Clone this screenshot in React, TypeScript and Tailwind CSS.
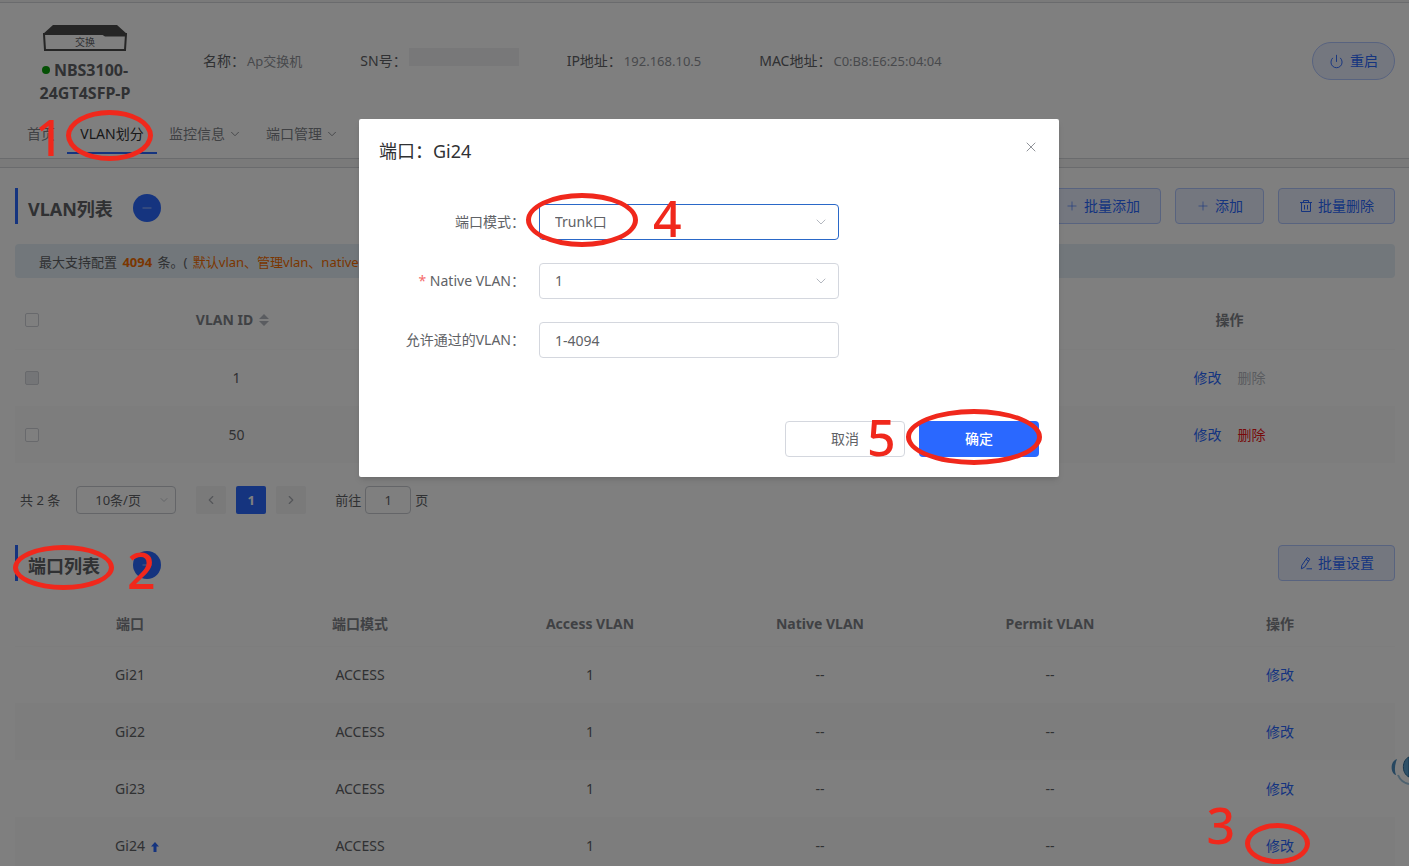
import { useState, type ReactNode } from 'react';
import { ChevronDown, ChevronLeft, ChevronRight, Minus, Plus, Power, X } from 'lucide-react';

const ports = [
  { name: 'Gi21', mode: 'ACCESS', access: '1', uplink: false },
  { name: 'Gi22', mode: 'ACCESS', access: '1', uplink: false },
  { name: 'Gi23', mode: 'ACCESS', access: '1', uplink: false },
  { name: 'Gi24', mode: 'ACCESS', access: '1', uplink: true },
];

const vlans = [
  { id: '1', remark: 'VLAN0001', locked: true },
  { id: '50', remark: 'VLAN0050', locked: false },
];

function TrashIcon() {
  return (
    <svg viewBox="0 0 14 14" className="h-3.5 w-3.5" fill="none" stroke="currentColor" strokeWidth="1">
      <path d="M1 3.5h12M4.5 3.5v-2h5v2M2.5 3.5v9h9v-9M5.500 6v4.500M8.500 6v4.500" />
    </svg>
  );
}

function EditIcon() {
  return (
    <svg viewBox="0 0 14 14" className="h-3.5 w-3.5" fill="none" stroke="currentColor" strokeWidth="1">
      <path d="M8.2 1.600 10.800 3.200 5.600 11.200 2.400 12.800 2.800 9.400zM7 3.400l2.700 1.700M7.500 12.800h5.500" />
    </svg>
  );
}

function SortIcon() {
  return (
    <svg viewBox="0 0 10 12" className="h-3 w-2.5" fill="#b4b8c0">
      <path d="M5 0l5 5H0zM5 12l5-5H0z" />
    </svg>
  );
}

function SwitchIcon() {
  return (
    <svg viewBox="0 0 84 26" className="h-[26px] w-[84px]">
      <path d="M10 0h64l10 9H0z" fill="#4a4a4a" />
      <path d="M1 9h82l-1 16H2z" fill="none" stroke="#4a4a4a" strokeWidth="2" />
      <path d="M58 9h25v2.500H62z" fill="#4a4a4a" />
      <text x="42" y="21" textAnchor="middle" fontSize="10" fill="#606266">交换</text>
    </svg>
  );
}

function OutlineButton({ icon, children }: { icon: ReactNode; children: ReactNode }) {
  return (
    <button
      type="button"
      className="flex h-9 items-center gap-[5px] rounded border border-[#b0c6ff] bg-[#e8eeff] px-5 text-[#2a68ff]"
    >
      {icon}
      {children}
    </button>
  );
}

function SectionTitle({ children }: { children: ReactNode }) {
  return (
    <div className="flex h-9 items-center border-l-[3px] border-[#2a68ff] pt-1 pl-2.5">
      <h2 className="min-w-[88px] pt-0.5 text-lg font-bold text-[#606266]">{children}</h2>
      <button
        type="button"
        aria-label="收起"
        className="ml-[17px] flex h-7 w-7 items-center justify-center rounded-full bg-[#2a68ff] text-white"
      >
        <Minus size={14} strokeWidth={1} />
      </button>
    </div>
  );
}

function Info({ label, children }: { label: string; children?: ReactNode }) {
  return (
    <div className="flex items-center">
      <dt className="text-[#606266]">{label}：</dt>
      <dd className="pr-2.5 pl-0.5 text-[13px] text-[#909399]">{children}</dd>
    </div>
  );
}

function Header() {
  return (
    <header className="mt-0.5 border-y border-[#d4d6da] bg-white pt-[22px] pb-1">
      <div className="flex items-start">
        <div className="flex w-[170px] flex-col items-center">
          <SwitchIcon />
          <div className="mt-2 text-center text-base leading-[23px] font-bold text-[#606266]">
            <span className="mr-1 inline-block h-2 w-2 -translate-y-0.5 rounded-full bg-[#08a008]" />
            NBS3100-
            <br />
            24GT4SFP-P
          </div>
        </div>
        <dl className="flex flex-1 items-center gap-12 pt-[23px] pl-[33px] leading-5">
          <Info label="名称">Ap交换机</Info>
          <Info label="SN号">
            <span className="-mr-2.5 mb-2 block h-[18px] w-[110px] bg-[#f0f0f2]" />
          </Info>
          <Info label="IP地址">192.168.10.5</Info>
          <Info label="MAC地址">C0:B8:E6:25:04:04</Info>
        </dl>
        <button
          type="button"
          className="mt-[17px] mr-3.5 flex h-[38px] items-center gap-1.5 rounded-full border border-[#b0c6ff] bg-[#e8eeff] px-4 text-[#2a68ff]"
        >
          <Power size={15} strokeWidth={1.5} />
          重启
        </button>
      </div>
      <nav className="mt-[9px] flex h-10 px-[15px] text-[#808389]">
        <a href="#home" className="px-3 leading-10">首页</a>
        <a href="#vlan" className="min-w-[90px] border-b-2 border-[#2a68ff] px-3 text-center leading-10 text-[#303133]">
          VLAN划分
        </a>
        <a href="#monitor" className="flex items-center gap-[3px] px-3">
          监控信息 <ChevronDown size={14} strokeWidth={1.5} />
        </a>
        <a href="#ports" className="flex items-center gap-[3px] px-3">
          端口管理 <ChevronDown size={14} strokeWidth={1.5} />
        </a>
      </nav>
    </header>
  );
}

function VlanSection() {
  return (
    <section>
      <div className="flex justify-between">
        <SectionTitle>VLAN列表</SectionTitle>
        <div className="flex gap-3.5">
          <OutlineButton icon={<Plus size={14} strokeWidth={1} />}>批量添加</OutlineButton>
          <OutlineButton icon={<Plus size={14} strokeWidth={1} />}>添加</OutlineButton>
          <OutlineButton icon={<TrashIcon />}>批量删除</OutlineButton>
        </div>
      </div>

      <p className="mt-5 h-[34px] rounded bg-[#e4eff6] px-6 text-[13px] leading-9 text-[#606266]">
        最大支持配置 <b className="mx-0.5 text-[#f56c00]">4094</b> 条。(
        <span className="ml-0.5 text-[#f56c00]"> 默认vlan、管理vlan、native vlan不可删除</span> )
      </p>

      <table className="mt-3.5 w-full table-fixed text-center text-[#606266]">
        <thead>
          <tr className="h-[57px] border-b border-[#fafafa] text-[#808389]">
            <th className="w-14 text-left">
              <input type="checkbox" aria-label="全选" className="ml-2.5 block h-3.5 w-3.5 appearance-none rounded-xs border border-[#d0d3d9] bg-white" />
            </th>
            <th className="pr-2 font-bold">
              <span className="inline-flex items-center gap-1.5">VLAN ID <SortIcon /></span>
            </th>
            <th className="font-bold">备注</th>
            <th className="font-bold">端口</th>
            <th className="font-bold">操作</th>
          </tr>
        </thead>
        <tbody>
          {vlans.map((v) => (
            <tr key={v.id} className="h-[57px] even:bg-[#fafafa]">
              <td>
                <input
                  type="checkbox"
                  aria-label={`VLAN ${v.id}`}
                  disabled={v.locked}
                  className="ml-2.5 block h-3.5 w-3.5 appearance-none rounded-xs border border-[#d0d3d9] bg-white disabled:bg-[#e8eaee]"
                />
              </td>
              <td>{v.id}</td>
              <td>{v.remark}</td>
              <td>--</td>
              <td>
                <button type="button" className="text-[#2a68ff]">修改</button>
                <button
                  type="button"
                  disabled={v.locked}
                  className="ml-4 text-[#f01414] disabled:text-[#b4b8c0]"
                >
                  删除
                </button>
              </td>
            </tr>
          ))}
        </tbody>
      </table>

      <div className="mt-[22px] flex h-[30px] items-center pl-[5px] text-[13px] text-[#606266]">
        <span>共 2 条</span>
        <div className="relative ml-4">
          <select aria-label="每页条数" className="h-7 w-[100px] appearance-none rounded border border-[#c8cbd1] bg-white pl-[18px]">
            <option>10条/页</option>
          </select>
          <ChevronDown size={12} strokeWidth={1.5} className="absolute top-2 right-1.5 text-[#b4b8c0]" />
        </div>
        <div className="ml-5 flex gap-2.5">
          <button type="button" aria-label="上一页" className="flex h-7 w-[30px] items-center justify-center rounded-xs bg-[#f4f4f5] text-[#a8abb2]">
            <ChevronLeft size={14} />
          </button>
          <button type="button" className="h-7 w-[30px] rounded-xs bg-[#2a68ff] font-bold text-white">1</button>
          <button type="button" aria-label="下一页" className="flex h-7 w-[30px] items-center justify-center rounded-xs bg-[#f4f4f5] text-[#a8abb2]">
            <ChevronRight size={14} />
          </button>
        </div>
        <label htmlFor="jump" className="ml-[29px]">前往</label>
        <input id="jump" defaultValue="1" className="mx-1 h-7 w-[46px] rounded border border-[#c8cbd1] bg-white text-center" />
        <span>页</span>
      </div>
    </section>
  );
}

function PortSection({ onEdit }: { onEdit: () => void }) {
  return (
    <section className="mt-[30px]">
      <div className="flex justify-between">
        <SectionTitle>端口列表</SectionTitle>
        <OutlineButton icon={<EditIcon />}>批量设置</OutlineButton>
      </div>
      <table className="mt-[21px] w-full table-fixed text-center text-[#606266]">
        <thead>
          <tr className="h-11 border-b border-[#fafafa] text-[#808389]">
            {['端口', '端口模式', 'Access VLAN', 'Native VLAN', 'Permit VLAN', '操作'].map((h) => (
              <th key={h} className="font-bold">{h}</th>
            ))}
          </tr>
        </thead>
        <tbody>
          {ports.map((p) => (
            <tr key={p.name} className="h-[57px] even:bg-[#fafafa]">
              <td>
                <span className="relative">
                  {p.name}
                  {p.uplink && (
                    <svg viewBox="0 0 8 10" className="absolute top-1.5 left-full ml-1.5 h-2.5 w-2" fill="#2a68ff">
                      <path d="M4 0l4 4.500H5.500V10h-3V4.500H0z" />
                    </svg>
                  )}
                </span>
              </td>
              <td>{p.mode}</td>
              <td>{p.access}</td>
              <td>--</td>
              <td>--</td>
              <td>
                <button type="button" onClick={onEdit} className="text-[#2a68ff]">修改</button>
              </td>
            </tr>
          ))}
        </tbody>
      </table>
    </section>
  );
}

function PortDialog({ onClose }: { onClose: () => void }) {
  const label = 'w-40 pr-3.5 text-right text-[#606266]';
  const field = 'h-9 w-[300px] appearance-none rounded border bg-white px-[15px] text-[#606266] outline-none';

  return (
    <div className="absolute inset-0 flex items-start justify-center bg-black/50 pt-[119px] pl-[9px]">
      <div role="dialog" aria-label="端口：Gi24" className="w-[700px] rounded-xs bg-white p-5 shadow-md">
        <div className="flex items-start justify-between">
          <h3 className="text-lg leading-6 text-[#303133]">端口：Gi24</h3>
          <button type="button" aria-label="关闭" onClick={onClose} className="text-[#909399]">
            <X size={16} strokeWidth={1.5} />
          </button>
        </div>
        <form className="mt-[41px] flex flex-col gap-[23px]">
          <div className="flex items-center">
            <label htmlFor="mode" className={label}>端口模式：</label>
            <div className="relative">
              <select id="mode" className={`${field} border-[#2a68c8]`}>
                <option>Trunk口</option>
                <option>Access口</option>
              </select>
              <ChevronDown size={16} strokeWidth={1.5} className="absolute top-2.5 right-2.5 text-[#b4b8c0]" />
            </div>
          </div>
          <div className="flex items-center">
            <label htmlFor="native" className={label}>
              <span className="text-[#f56c6c]">*</span> Native VLAN：
            </label>
            <div className="relative">
              <select id="native" className={`${field} border-[#d4d7de]`}>
                <option>1</option>
                <option>50</option>
              </select>
              <ChevronDown size={16} strokeWidth={1.5} className="absolute top-2.5 right-2.5 text-[#b4b8c0]" />
            </div>
          </div>
          <div className="flex items-center">
            <label htmlFor="permit" className={label}>允许通过的VLAN：</label>
            <input id="permit" defaultValue="1-4094" className={`${field} border-[#d4d7de]`} />
          </div>
        </form>
        <div className="mt-[63px] flex justify-end gap-3.5">
          <button type="button" onClick={onClose} className="h-9 w-[120px] rounded border border-[#d4d7de] text-[#606266]">
            取消
          </button>
          <button type="button" onClick={onClose} className="h-9 w-[120px] rounded bg-[#2a68ff] font-medium text-white">
            确定
          </button>
        </div>
      </div>
    </div>
  );
}

// Numbered steps drawn over the page: an ellipse round the control and its number
const steps = [
  { n: 1, ring: 'left-[66px] top-[110px] h-[51px] w-[87px]', num: 'left-[35px] top-[112px]' },
  { n: 2, ring: 'left-[13px] top-[545px] h-[45px] w-[101px]', num: 'left-[127px] top-[545px]' },
  { n: 3, ring: 'right-[99px] top-[823px] h-[41px] w-[65px]', num: 'right-[174px] top-[800px]' },
  { n: 4, ring: 'left-[526px] top-[193px] h-[54px] w-[112px]', num: 'left-[653px] top-[193px]' },
  { n: 5, ring: 'left-[906px] top-[409px] h-[56px] w-[136px]', num: 'left-[867px] top-[412px]' },
];

function StepMarks() {
  return (
    <div className="pointer-events-none absolute inset-0 text-[50px] leading-[50px] font-medium text-[#f0281c]">
      {steps.map((s) => (
        <div key={s.n}>
          <span className={`absolute rounded-[50%] border-[5px] border-[#f0281c] ${s.ring}`} />
          <span className={`absolute ${s.num}`}>{s.n}</span>
        </div>
      ))}
    </div>
  );
}

export default function App() {
  const [open, setOpen] = useState(true);

  return (
    <div className="relative flex h-screen flex-col overflow-hidden bg-[#f5f5f5] font-['Noto_Sans','Noto_Sans_CJK_SC',sans-serif] text-sm">
      <Header />
      <main className="mt-2 flex-1 border-t border-[#d4d6da] bg-white pt-5 pr-3.5 pl-[15px]">
        <VlanSection />
        <PortSection onEdit={() => setOpen(true)} />
      </main>
      <svg viewBox="0 0 18 32" className="absolute top-[754px] right-0 h-8 w-[18px]">
        <path d="M6 5C-1 7-1 19 5 21c-2-5-1-11 1-16z" fill="#4f8fc0" />
        <path d="M18 3c-7 3-8 16 0 20z" fill="#5fa3d0" stroke="#2c6a98" />
        <path d="M7 21c2 5 6 8 11 9" fill="none" stroke="#9cc4de" strokeWidth="2" />
      </svg>
      {open && <PortDialog onClose={() => setOpen(false)} />}
      <StepMarks />
    </div>
  );
}
